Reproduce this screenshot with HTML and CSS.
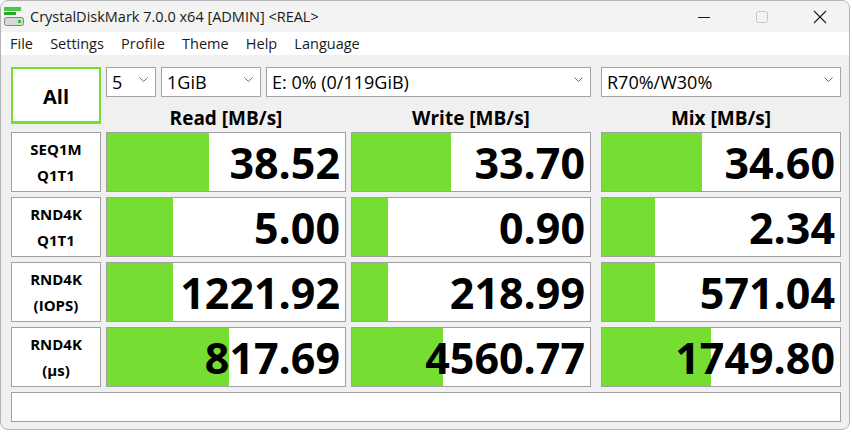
FILE: index.html
```html
<!DOCTYPE html>
<html>
<head>
<meta charset="utf-8">
<title>CrystalDiskMark</title>
<link rel="stylesheet" href="styles.css">
</head>
<body>
<div class="window">
  <div class="titlebar">
    <svg class="appicon" viewBox="0 0 21 20" width="21" height="20">
      <rect x="0" y="0" width="17" height="4" fill="#46c946"/>
      <rect x="0" y="5" width="12" height="3" fill="#2ea62e"/>
      <rect x="0.5" y="10.5" width="19" height="8" rx="2" fill="#d4d8db" stroke="#7d858c"/>
      <rect x="14" y="13" width="3" height="3" fill="#35c435"/>
    </svg>
    <span class="title">CrystalDiskMark 7.0.0 x64 [ADMIN] &lt;REAL&gt;</span>
    <div class="caption">
      <span class="cbtn"><svg width="14" height="14" viewBox="0 0 14 14"><line x1="1" y1="7.5" x2="13" y2="7.5" stroke="#1b1b1b" stroke-width="1"/></svg></span>
      <span class="cbtn"><svg width="14" height="14" viewBox="0 0 14 14"><rect x="1.5" y="1.5" width="11" height="11" rx="2" fill="none" stroke="#c6c6c6" stroke-width="1"/></svg></span>
      <span class="cbtn"><svg width="14" height="14" viewBox="0 0 14 14"><path d="M1 1 L13 13 M13 1 L1 13" stroke="#1b1b1b" stroke-width="1.1"/></svg></span>
    </div>
  </div>
  <div class="menubar">
    <span class="mi">File</span>
    <span class="mi">Settings</span>
    <span class="mi">Profile</span>
    <span class="mi">Theme</span>
    <span class="mi">Help</span>
    <span class="mi">Language</span>
  </div>
  <div class="client">
    <div class="grid">
      <div class="allbtn">All</div>
      <div class="toprow">
        <div class="combo c-count"><span>5</span><svg class="chev" width="9" height="6" viewBox="0 0 9 6"><polyline points="0.5,0.5 4.5,4.5 8.5,0.5" fill="none" stroke="#6b6b6b" stroke-width="1"/></svg></div>
        <div class="combo c-size"><span>1GiB</span><svg class="chev" width="9" height="6" viewBox="0 0 9 6"><polyline points="0.5,0.5 4.5,4.5 8.5,0.5" fill="none" stroke="#6b6b6b" stroke-width="1"/></svg></div>
        <div class="combo c-drive"><span>E: 0% (0/119GiB)</span><svg class="chev" width="9" height="6" viewBox="0 0 9 6"><polyline points="0.5,0.5 4.5,4.5 8.5,0.5" fill="none" stroke="#6b6b6b" stroke-width="1"/></svg></div>
      </div>
      <div class="combo c-mix"><span>R70%/W30%</span><svg class="chev" width="9" height="6" viewBox="0 0 9 6"><polyline points="0.5,0.5 4.5,4.5 8.5,0.5" fill="none" stroke="#6b6b6b" stroke-width="1"/></svg></div>

      <div class="hdr col-read">Read [MB/s]</div>
      <div class="hdr col-write">Write [MB/s]</div>
      <div class="hdr col-mix">Mix [MB/s]</div>

      <div class="label">SEQ1M<br>Q1T1</div>
      <div class="cell" style="--w:102px">38.52</div>
      <div class="cell" style="--w:99px">33.70</div>
      <div class="cell" style="--w:100px">34.60</div>

      <div class="label">RND4K<br>Q1T1</div>
      <div class="cell" style="--w:66px">5.00</div>
      <div class="cell" style="--w:36px">0.90</div>
      <div class="cell" style="--w:53px">2.34</div>

      <div class="label">RND4K<br>(IOPS)</div>
      <div class="cell" style="--w:66px">1221.92</div>
      <div class="cell" style="--w:36px">218.99</div>
      <div class="cell" style="--w:53px">571.04</div>

      <div class="label">RND4K<br>(µs)</div>
      <div class="cell" style="--w:122px">817.69</div>
      <div class="cell" style="--w:91px">4560.77</div>
      <div class="cell" style="--w:109px">1749.80</div>

      <div class="status"></div>
    </div>
  </div>
</div>
</body>
</html>
```

FILE: styles.css
```css
html, body {
  margin: 0;
  padding: 0;
  background: #ffffff;
}

body {
  font-family: "Open Sans", "Noto Sans", sans-serif;
  color: #000;
}

.window {
  width: 850px;
  height: 430px;
  box-sizing: border-box;
  border: 1px solid #b4b4b4;
  border-radius: 8px;
  overflow: hidden;
  background: #f0f0f0;
  display: flex;
  flex-direction: column;
}

.titlebar {
  height: 31px;
  flex: none;
  background: #f3f3f3;
  display: flex;
  align-items: center;
}

.appicon {
  margin-left: 3px;
  margin-right: 5px;
  flex: none;
}

.title {
  font-size: 14.5px;
  color: #1a1a1a;
  white-space: nowrap;
}

.caption {
  margin-left: auto;
  display: flex;
  height: 100%;
}

.cbtn {
  width: 58px;
  display: flex;
  align-items: center;
  justify-content: center;
}

.menubar {
  height: 23px;
  flex: none;
  background: #ffffff;
  display: flex;
  align-items: center;
  font-size: 14.5px;
  color: #1a1a1a;
}

.mi {
  padding: 0 8.6px;
}

.mi:first-child {
  padding-left: 9px;
}

.client {
  flex: 1;
  padding: 12px 0 0 10px;
}

.grid {
  display: grid;
  grid-template-columns: 90px 240px 245px 240px;
  grid-template-rows: 30px 25px repeat(4, 60px) 30px;
  column-gap: 5px;
  row-gap: 5px;
}

.allbtn {
  grid-column: 1;
  grid-row: 1 / 3;
  align-self: start;
  height: 57px;
  box-sizing: border-box;
  background: #ffffff;
  border: 2px solid #76dd33;
  border-bottom-width: 3px;
  display: flex;
  align-items: center;
  justify-content: center;
  padding-top: 3px;
  font-weight: 700;
  font-size: 20px;
}

.toprow {
  grid-column: 2 / 4;
  grid-row: 1;
  display: flex;
  gap: 5px;
  padding-right: 5px;
}

.combo {
  box-sizing: border-box;
  height: 30px;
  background: #ffffff;
  border: 1px solid #a5a5a5;
  display: flex;
  align-items: center;
  padding: 0 7px 0 5px;
  font-size: 18px;
  color: #000;
  white-space: nowrap;
}

.chev {
  margin-left: auto;
  flex: none;
  margin-top: -4px;
}

.c-count { width: 50px; flex: none; }
.c-size { width: 100px; flex: none; }
.c-drive { flex: 1; }
.c-mix { grid-column: 4; grid-row: 1; }

.hdr {
  grid-row: 2;
  align-self: end;
  width: 240px;
  text-align: center;
  font-weight: 700;
  font-size: 19px;
  line-height: 18px;
}

.col-read { grid-column: 2; }
.col-write { grid-column: 3; }
.col-mix { grid-column: 4; }

.label {
  box-sizing: border-box;
  background: #ffffff;
  border: 1px solid #a0a0a0;
  display: flex;
  align-items: center;
  justify-content: center;
  text-align: center;
  font-weight: 700;
  font-size: 15px;
  line-height: 26px;
}

.cell {
  box-sizing: border-box;
  width: 240px;
  border: 1px solid #a0a0a0;
  background: linear-gradient(to right, #76dd33 0, #76dd33 var(--w), #ffffff var(--w), #ffffff 100%);
  display: flex;
  align-items: center;
  justify-content: flex-end;
  padding-right: 5px;
  font-weight: 700;
  font-size: 43px;
  line-height: 1;
}

.status {
  grid-column: 1 / -1;
  box-sizing: border-box;
  background: #ffffff;
  border: 1px solid #a0a0a0;
}
```
